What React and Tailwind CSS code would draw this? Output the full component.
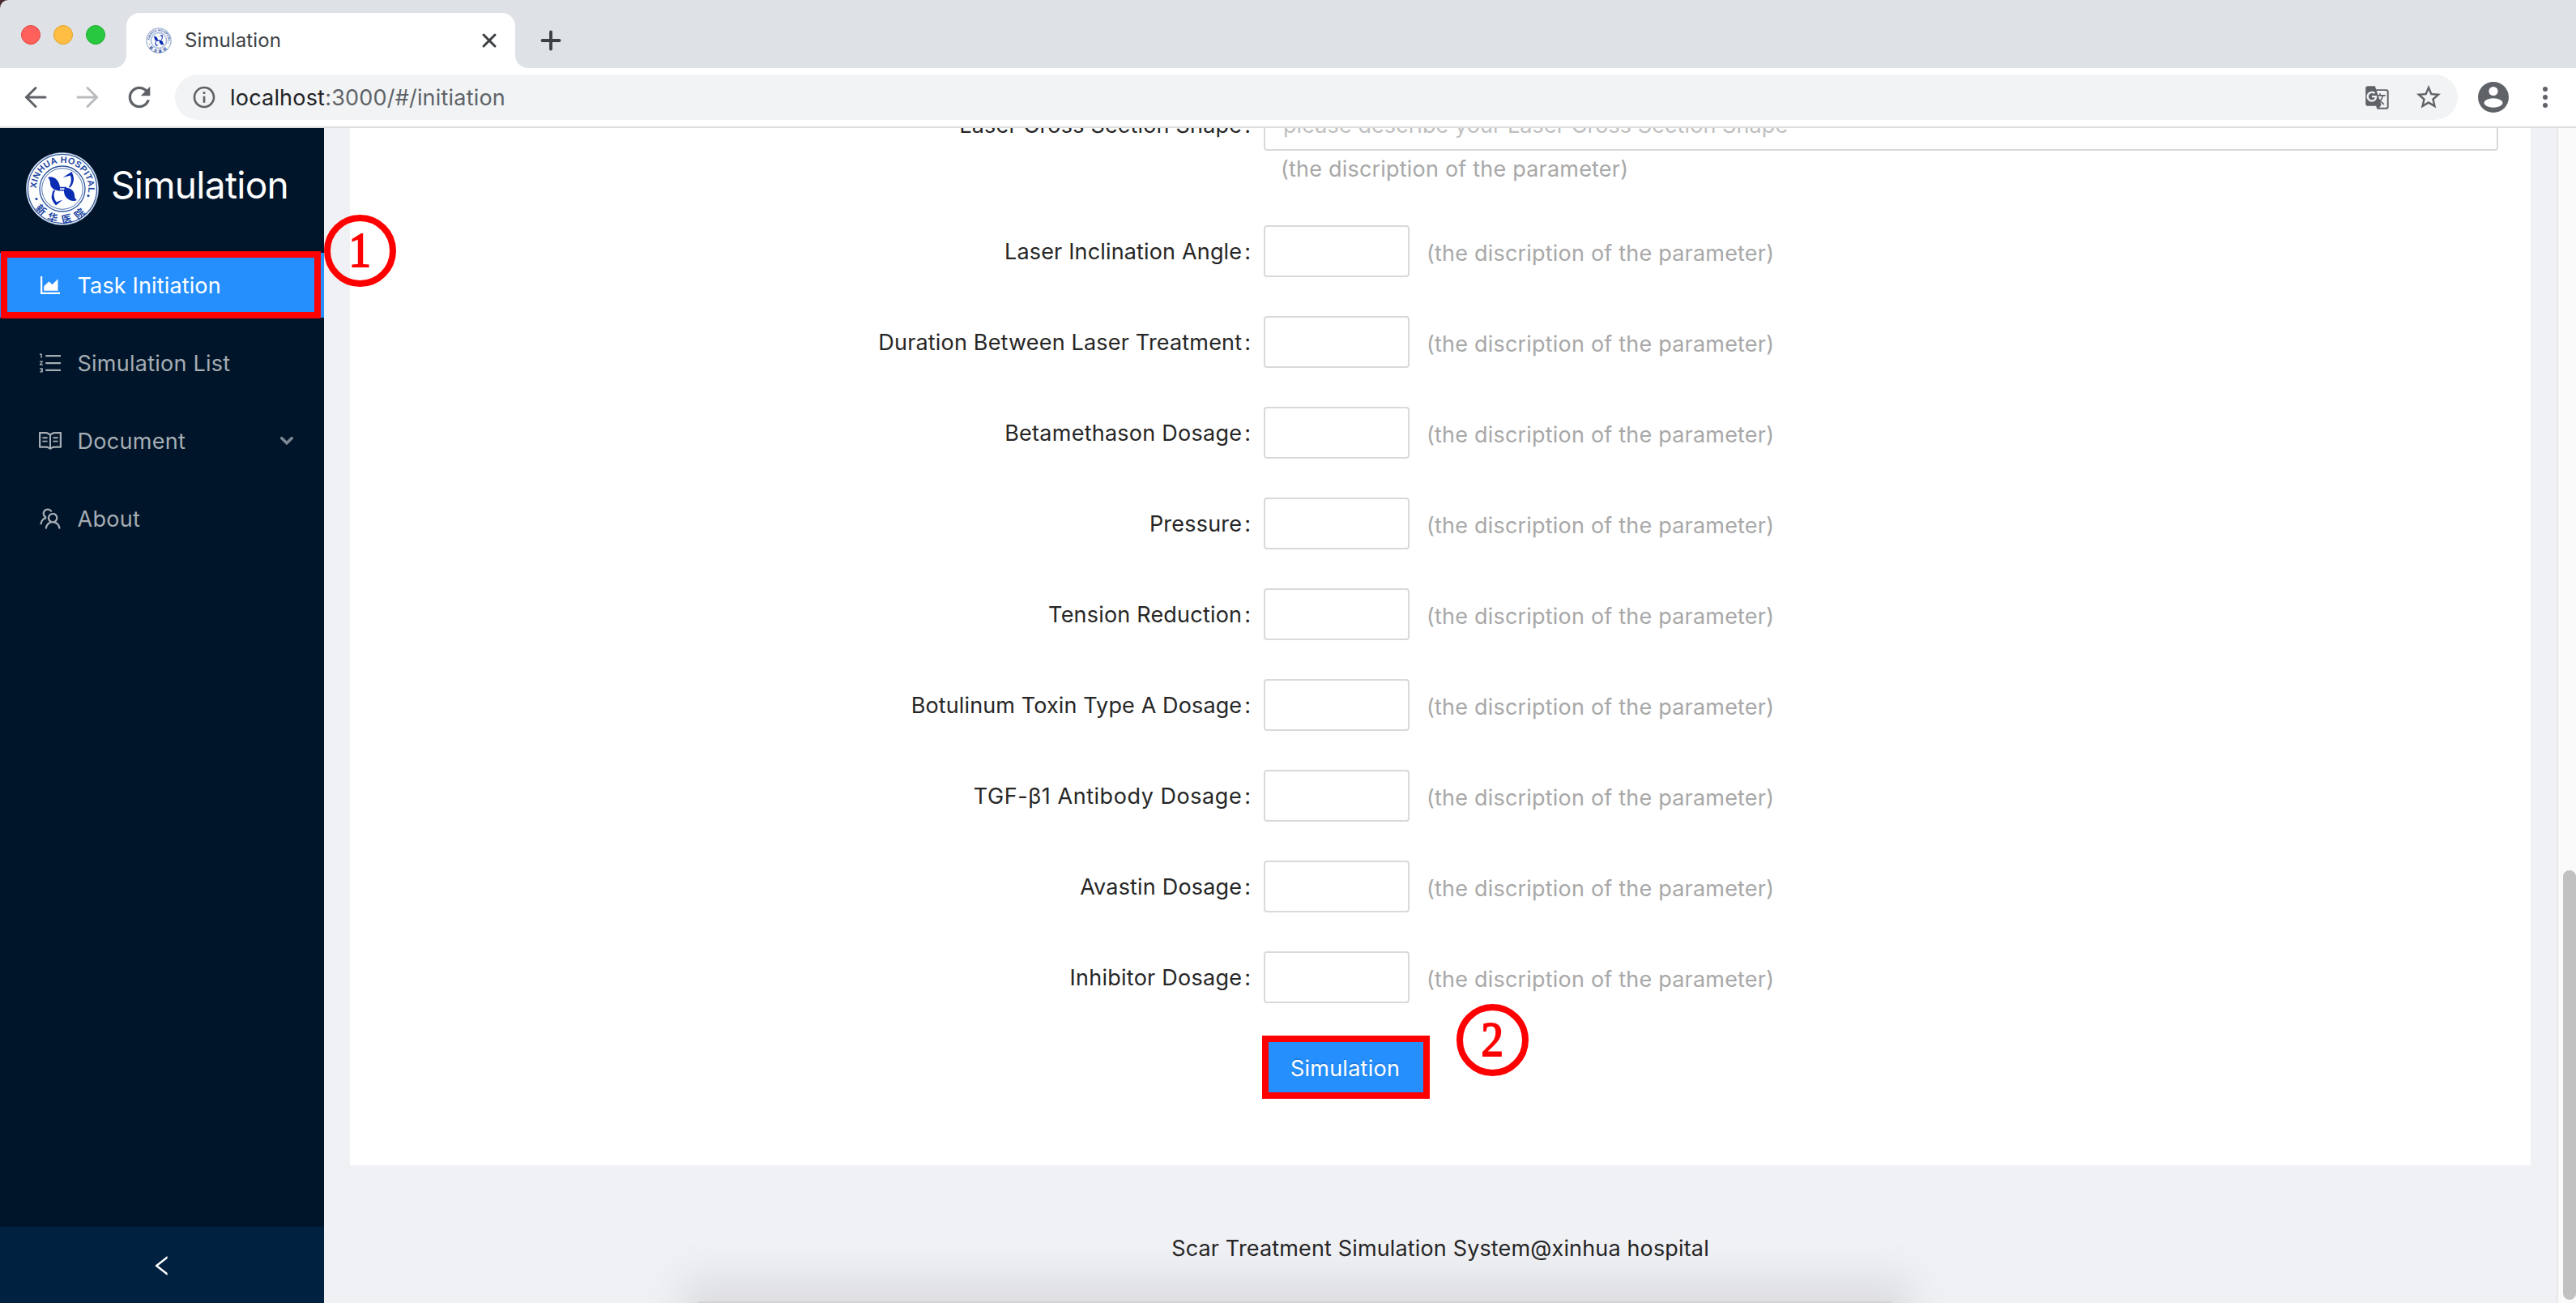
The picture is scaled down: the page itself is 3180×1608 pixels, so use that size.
import React from 'react';
import {
  AiOutlineAreaChart,
  AiOutlineOrderedList,
  AiOutlineRead,
  AiOutlineTeam,
  AiOutlineLeft,
} from 'react-icons/ai';
import { MdGTranslate, MdStarBorder, MdRefresh, MdInfoOutline } from 'react-icons/md';

const ROWS = [
  { label: 'Laser Inclination Angle', tracking: 'tracking-[0.16px]' },
  { label: 'Duration Between Laser Treatment', tracking: 'tracking-[0.18px]' },
  { label: 'Betamethason Dosage', tracking: 'tracking-[0.25px]' },
  { label: 'Pressure', tracking: 'tracking-[0.21px]' },
  { label: 'Tension Reduction', tracking: 'tracking-[0.2px]' },
  { label: 'Botulinum Toxin Type A Dosage', tracking: 'tracking-[0.12px]' },
  { label: 'TGF-β1 Antibody Dosage', tracking: 'tracking-[0.55px]' },
  { label: 'Avastin Dosage', tracking: 'tracking-[0.18px]' },
  { label: 'Inhibitor Dosage', tracking: 'tracking-[0.25px]' },
];

function HospitalLogo({ className, id }) {
  return (
    <svg viewBox="0 0 90 90" className={className}>
      <defs>
        <path id={`${id}-top`} d="M 14.2 53.5 A 32 32 0 1 1 75.8 53.5" />
        <path id={`${id}-bottom`} d="M 5.5 55 A 40.4 40.4 0 0 0 84.5 55" />
      </defs>
      <circle cx="45" cy="45" r="44.6" fill="#fdfefe" stroke="#8fa8c8" strokeWidth="0.8" />
      <circle cx="45" cy="45" r="42.6" fill="none" stroke="#2f57a0" strokeWidth="1.3" />
      <circle cx="45" cy="45" r="28" fill="none" stroke="#2f57a0" strokeWidth="1.3" />
      <circle cx="45" cy="45" r="25.3" fill="none" stroke="#3d63a8" strokeWidth="0.9" />
      <text
        fill="#1f48a4"
        fontFamily="'Liberation Sans', Arial, sans-serif"
        fontWeight="700"
        fontSize="11"
      >
        <textPath href={`#${id}-top`} startOffset="9" textLength="105" lengthAdjust="spacing">
          XINHUA HOSPITAL
        </textPath>
      </text>
      <text
        fill="#1f48a4"
        fontFamily="'Noto Sans CJK SC', sans-serif"
        fontWeight="700"
        fontSize="12.5"
      >
        <textPath href={`#${id}-bottom`} startOffset="50%" textAnchor="middle" letterSpacing="7">
          新华医院
        </textPath>
      </text>
      <circle cx="13" cy="57.5" r="1.6" fill="#1f48a4" />
      <circle cx="77" cy="53.5" r="1.6" fill="#1f48a4" />
      <g fill="#0a2db4">
        <path d="M27 31 C33 28 41 33 42 43 L42.5 47 C36 48 30 44 30 38 C30 35 29 33 27 31 Z" />
        <path d="M63 59 C57 62 48 58 47 49 L47 43.5 C54 43 60 47 60 53 C60 56 61 58 63 59 Z" />
        <path d="M40 42.8 H50 V47.4 H40 Z" />
        <path d="M42 44.3 H47.5 V46 H42 Z" fill="#fff" />
        <path d="M45.5 31 L56.5 24 Q60 31 58.6 36 Q58 40 54.5 43.5 L53 43 Q57.5 36 55 28.5 Z" />
        <path d="M45.5 58.5 L37 65.5 Q32 60 31.6 55 Q32 50 34 46.5 L36 47 Q32.5 54 37.5 61.5 Z" />
      </g>
    </svg>
  );
}

function Badge({ n, className }) {
  return (
    <div
      className={`absolute z-10 flex h-[89px] w-[89px] items-center justify-center rounded-full border-8 border-[#ff0000] pb-[2px] font-['Liberation_Serif',serif] text-[61px] leading-none text-[#ff0000] [-webkit-text-stroke:2px_#ff0000] ${className}`}
    >
      <span className="scale-x-90">{n}</span>
    </div>
  );
}

function Corner({ className }) {
  return (
    <svg viewBox="0 0 16 16" className={`h-4 w-4 self-end ${className}`}>
      <path d="M16 0 V16 H0 A16 16 0 0 0 16 0 Z" fill="#fff" />
    </svg>
  );
}

function TabStrip() {
  return (
    <div className="relative flex h-[84px] items-end bg-[#dee1e6]">
      <svg viewBox="0 0 12 12" className="absolute left-0 top-0 h-3 w-3">
        <path d="M0 0 H10 A10 10 0 0 0 0 10 Z" fill="#4a2a30" />
      </svg>
      <div className="flex h-full w-[140px] items-center gap-4 pl-[26px] pt-[2px]">
        <span className="h-6 w-6 rounded-full border border-[#e2463f] bg-[#ff605c]" />
        <span className="h-6 w-6 rounded-full border border-[#dfa123] bg-[#ffbd44]" />
        <span className="h-6 w-6 rounded-full border border-[#1dad2b] bg-[#28c940]" />
      </div>
      <Corner className="" />
      <div className="flex h-[68px] w-[480px] items-center rounded-t-2xl bg-white pl-6 pr-[22px]">
        <HospitalLogo id="fav" className="h-8 w-8" />
        <span className="ml-4 flex-1 text-2xl leading-8 tracking-[0.1px] text-[#3c4043]">
          Simulation
        </span>
        <svg viewBox="0 0 20 20" className="h-5 w-5">
          <path
            d="M3 3 L17 17 M17 3 L3 17"
            stroke="#3c4043"
            strokeWidth="3"
            strokeLinecap="round"
            fill="none"
          />
        </svg>
      </div>
      <Corner className="-scale-x-100" />
      <svg viewBox="0 0 26 26" className="mb-[21px] ml-[15px] h-[26px] w-[26px]">
        <path
          d="M13 2.5 V23.5 M2.5 13 H23.5"
          stroke="#3c4043"
          strokeWidth="3.8"
          strokeLinecap="round"
        />
      </svg>
    </div>
  );
}

function ToolBar() {
  return (
    <div className="flex h-[74px] items-center border-b-2 border-[#dadce0] bg-white pl-[30px]">
      <svg viewBox="0 0 28 28" className="h-7 w-7">
        <path
          d="M26 14 H3 M14 2.5 L2.5 14 L14 25.5"
          stroke="#5f6368"
          strokeWidth="3"
          strokeLinecap="round"
          fill="none"
        />
      </svg>
      <svg viewBox="0 0 28 28" className="ml-9 h-7 w-7">
        <path
          d="M2 14 H25 M14 2.5 L25.5 14 L14 25.5"
          stroke="#babcbe"
          strokeWidth="3"
          strokeLinecap="round"
          fill="none"
        />
      </svg>
      <MdRefresh className="ml-[30px] h-10 w-10 text-[#5f6368]" />
      <div className="ml-6 flex h-14 w-[2818px] items-center rounded-full bg-[#f1f3f4] pl-5">
        <MdInfoOutline className="h-8 w-8 text-[#5f6368]" />
        <span className="ml-4 mt-px flex-1 text-[27px] leading-8 tracking-[0.2px] text-[#5f6368]">
          <span className="text-[#202124]">localhost</span>:3000/#/initiation
        </span>
        <MdGTranslate className="h-[31px] w-[31px] text-[#5f6368]" />
        <MdStarBorder className="ml-[30px] mr-[18px] h-9 w-9 text-[#5f6368]" />
      </div>
      <svg viewBox="0 0 38 38" className="ml-[25px] h-[38px] w-[38px]">
        <circle cx="19" cy="19" r="19" fill="#5f6368" />
        <circle cx="19" cy="11.5" r="5.6" fill="#fff" />
        <ellipse cx="19" cy="26" rx="11.5" ry="5.8" fill="#fff" />
      </svg>
      <div className="ml-[42px] flex flex-col gap-1">
        <span className="h-1.5 w-1.5 rounded-full bg-[#5f6368]" />
        <span className="h-1.5 w-1.5 rounded-full bg-[#5f6368]" />
        <span className="h-1.5 w-1.5 rounded-full bg-[#5f6368]" />
      </div>
    </div>
  );
}

function MenuItem({ icon: Icon, label, active, tracking, children }) {
  return (
    <div
      className={`flex h-20 items-center pl-[46px] pr-[38px] text-[27px] leading-10 ${
        active ? 'bg-[#258ffe] text-white' : 'text-[#a6adb4]'
      }`}
    >
      <Icon className="h-8 w-8" />
      <span className={`ml-[17.5px] mt-0.5 flex-1 ${tracking}`}>{label}</span>
      {children}
    </div>
  );
}

function Sidebar() {
  return (
    <aside className="flex w-[400px] flex-col bg-[#001529]">
      <div className="flex h-[154px] items-start pl-8 pt-[30px]">
        <HospitalLogo id="brand" className="h-[90px] w-[90px]" />
        <span className="ml-[15px] mt-2 text-[46px] leading-[64px] tracking-[-0.7px] text-white">
          Simulation
        </span>
      </div>
      <nav className="flex flex-1 flex-col gap-4">
        <MenuItem
          icon={AiOutlineAreaChart}
          label="Task Initiation"
          active
          tracking="tracking-[0.15px]"
        />
        <MenuItem
          icon={AiOutlineOrderedList}
          label="Simulation List"
          tracking="tracking-[0.25px]"
        />
        <MenuItem icon={AiOutlineRead} label="Document" tracking="tracking-[0.3px]">
          <svg viewBox="0 0 16 10" className="h-2.5 w-4">
            <path
              d="M1.8 1.8 L8 7.8 L14.2 1.8"
              stroke="#7b8794"
              strokeWidth="3.6"
              strokeLinecap="round"
              fill="none"
            />
          </svg>
        </MenuItem>
        <MenuItem icon={AiOutlineTeam} label="About" tracking="tracking-[0.3px]" />
      </nav>
      <div className="flex h-[94px] items-center justify-center bg-[#002140] pt-[2px] text-white">
        <AiOutlineLeft className="h-8 w-8" />
      </div>
    </aside>
  );
}

function Label({ text, tracking }) {
  return (
    <div className="flex h-16 w-[1128px] items-center justify-end pr-4 pt-0.5 text-[27px] leading-10 text-[#262626]">
      <span className={tracking}>{text}</span>
      <span className="ml-[3px]">:</span>
    </div>
  );
}

const HINT = '(the discription of the parameter)';

function Content() {
  return (
    <main className="flex h-[1280px] flex-col bg-white">
      <div className="-mt-9 flex h-[156px]">
        <Label text="Laser Cross Section Shape" tracking="tracking-[0.19px]" />
        <div className="flex w-[1524px] flex-col">
          <div className="flex h-16 items-center rounded border-2 border-[#d9d9d9] pl-[22px] pt-0.5 text-[27px] leading-10 tracking-[0.08px] text-[#bfbfbf]">
            please describe your Laser Cross Section Shape
          </div>
          <span className="ml-[21px] mt-[3px] text-[27px] leading-10 tracking-[0.2px] text-[#a8a8a8]">
            {HINT}
          </span>
        </div>
      </div>
      <div className="flex flex-col gap-12">
        {ROWS.map((row) => (
          <div key={row.label} className="flex h-16 items-center">
            <Label text={row.label} tracking={row.tracking} />
            <div className="h-16 w-[180px] rounded border-2 border-[#d9d9d9] bg-white" />
            <span className="ml-[21px] mt-1.5 text-[27px] leading-10 tracking-[0.2px] text-[#a8a8a8]">
              {HINT}
            </span>
          </div>
        ))}
        <div className="-mt-2 flex">
          <button className="ml-[1126px] h-[78px] w-[207px] border-8 border-[#ff0000] bg-[#258ffe] pr-0.5 pt-[3px] text-[27px] leading-[59px] tracking-[0.25px] text-white [text-shadow:0_-2px_0_rgba(0,0,0,0.12)]">
            Simulation
          </button>
        </div>
      </div>
    </main>
  );
}

export default function App() {
  return (
    <div className="relative flex h-[1608px] w-[3180px] flex-col overflow-hidden bg-[#f0f1f5] font-['Inter','Noto_Sans_CJK_SC',sans-serif]">
      <div className="relative z-20">
        <TabStrip />
        <ToolBar />
      </div>
      <div className="flex h-[1450px]">
        <Sidebar />
        <div className="flex flex-1 flex-col overflow-hidden px-8">
          <Content />
          <footer className="flex flex-1 items-start justify-center pt-[83px] text-[27px] leading-10 tracking-[0.15px] text-[#262626]">
            Scar Treatment Simulation System@xinhua hospital
          </footer>
        </div>
        <div className="flex w-6 flex-col items-end border-l-2 border-[#e8e8e8] bg-[#fafafa] pt-[916px]">
          <div className="h-[530px] w-4 rounded-full bg-[#c1c1c1]" />
        </div>
      </div>

      {/* callouts */}
      <div className="absolute left-px top-[310px] z-10 h-[83px] w-[395px] border-8 border-[#ff0000]" />
      <Badge n="1" className="left-[400px] top-[265px]" />
      <Badge n="2" className="left-[1798px] top-[1239px]" />

      {/* dock shadow along the lower edge */}
      <div className="absolute left-[842px] top-[1576px] h-[120px] w-[1516px] bg-black/8 blur-[24px]" />
      <div className="absolute bottom-0 left-[861px] h-0.5 w-[1474px] bg-black/6" />
    </div>
  );
}
